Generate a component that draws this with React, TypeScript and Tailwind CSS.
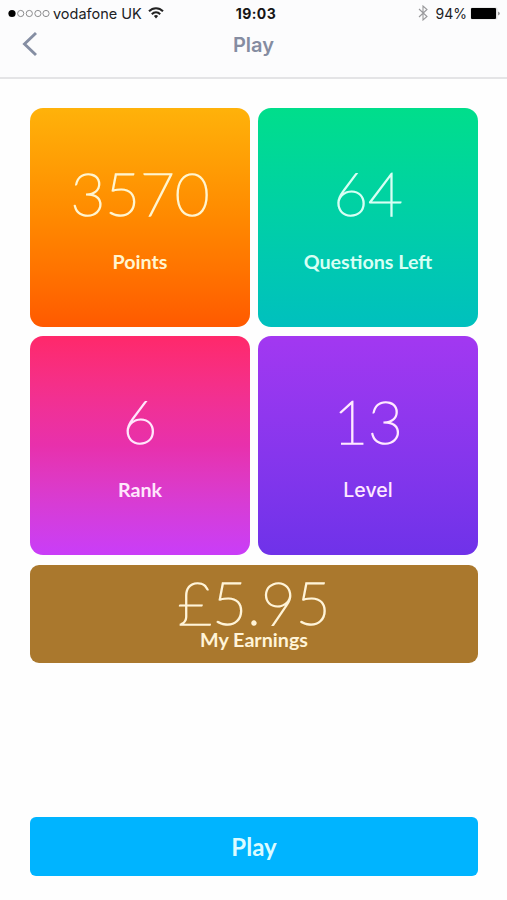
import React from "react";

type Tile = { value: string; label: string; background: string; labelStyle: string };

const lato = "font-['Lato','Liberation_Sans',sans-serif]";
const inter = "font-['Inter','Liberation_Sans',sans-serif]";
const figure = "text-[60px] font-thin [-webkit-text-stroke:1.5px_currentColor]";

const tiles: Tile[] = [
  { value: "3570", label: "Points", background: "from-[#ffb20a] via-[#ff8900] to-[#ff5900] text-[#fff5d0]", labelStyle: "font-bold text-[19.7px]" },
  { value: "64", label: "Questions Left", background: "from-[#00de8b] to-[#00c0be] text-[#d8fff4]", labelStyle: "font-bold text-[19.7px]" },
  { value: "6", label: "Rank", background: "from-[#ff286a] via-[#e830ac] to-[#c93df8] text-[#ffe6fc]", labelStyle: "font-bold text-[19.7px]" },
  { value: "13", label: "Level", background: "from-[#a238f1] to-[#6f32e9] text-[#ffe9ff]", labelStyle: "font-['Inter','Liberation_Sans',sans-serif] font-medium text-[19.5px]" },
];

function StatusBar() {
  return (
    <div className="grid h-[27px] grid-cols-[1fr_auto_1fr] items-center pl-[7px] pr-[6px] text-[14.5px] leading-none text-[#202124]">
      <div className="flex items-center">
        <svg width="43" height="9" viewBox="0 0 43 9" className="mr-[3px]">
          <circle cx="5" cy="4.5" r="3.6" fill="#000" />
          {[13.7, 22.3, 30.9, 39].map((cx) => (
            <circle key={cx} cx={cx} cy="4.5" r="3.1" fill="none" stroke="#8b8b8d" strokeWidth="1" />
          ))}
        </svg>
        <span className="whitespace-nowrap pt-px">vodafone UK</span>
        <svg width="16" height="12" viewBox="0 0 16 12" className="ml-[6px] -mt-px" fill="none" stroke="#222" strokeWidth="2">
          <path d="M1 4.3C5 .2 11 .2 15 4.3" />
          <path d="M3.8 7.2c2.4-2.5 6-2.5 8.4 0" />
          <path d="M5.9 9.1Q8 7.1 10.1 9.1L8 11.5Z" fill="#222" stroke="none" />
        </svg>
      </div>
      <span className="pl-[4px] text-[14px] font-bold tracking-[0.4px] text-[#161616]">19:03</span>
      <div className="flex items-center justify-end">
        <svg width="10" height="16" viewBox="0 0 10 16" className="-mt-px" fill="none" stroke="#99999c" strokeWidth="1.1">
          <path d="M1 4 9 11.5 5 15V1l4 3.5L1 12" />
        </svg>
        <span className="ml-[8px] text-[14px]">94%</span>
        <svg width="31" height="13" viewBox="0 0 31 13" className="ml-[3px]">
          <rect x="0.5" y="0.5" width="27" height="12" rx="1.5" fill="#ddd" />
          <rect x="1" y="1" width="25" height="11" rx="1" fill="#000" />
          <path d="M28.5 4.5q2 2 0 4Z" fill="#333" />
        </svg>
      </div>
    </div>
  );
}

export default function App() {
  return (
    <main className={`flex h-[900px] w-[507px] flex-col overflow-hidden bg-[#fefefe] ${lato}`}>
      <header className={`h-[79px] shrink-0 border-b-2 border-[#e4e4e6] bg-[#fcfcfd] ${inter}`}>
        <StatusBar />
        <div className="grid h-[36px] grid-cols-[1fr_auto_1fr] items-center pl-[22px] pr-[22px]">
          <button aria-label="Back" className="-mt-[2px] h-[26px] w-[16px]">
            <svg width="16" height="26" viewBox="0 0 16 26" fill="none" stroke="#858ea3" strokeWidth="2.9">
              <path d="M14 2 2.5 13 14 24" />
            </svg>
          </button>
          <h1 className="text-[20px] font-semibold leading-none text-[#858ca1]">Play</h1>
        </div>
      </header>
      <div className="flex flex-1 flex-col pl-[30px] pr-[29px] pt-[29px]">
        <section className="grid grid-cols-2 gap-x-[8px] gap-y-[9px]">
          {tiles.map((tile) => (
            <article key={tile.label} className={`flex h-[219px] flex-col items-center rounded-[13px] bg-linear-to-b pt-[49px] ${tile.background}`}>
              <strong className={`leading-[72px] ${figure}`}>{tile.value}</strong>
              <span className={`mt-[21px] leading-[24px] ${tile.labelStyle}`}>{tile.label}</span>
            </article>
          ))}
        </section>
        <section className="mt-[10px] flex h-[98px] flex-col items-center rounded-[9px] bg-[#aa782d] pt-[13px] text-[#fff4d8]">
          <strong className={`leading-[48px] ${figure}`}>£5.95</strong>
          <span className="mt-[2px] text-[19.7px] font-bold leading-[24px]">My Earnings</span>
        </section>
        <button className="mb-[24px] mt-auto h-[59px] rounded-[6px] bg-[#00b4ff] text-[24px] font-bold leading-[59px] text-[#dcfbff]">Play</button>
      </div>
    </main>
  );
}
